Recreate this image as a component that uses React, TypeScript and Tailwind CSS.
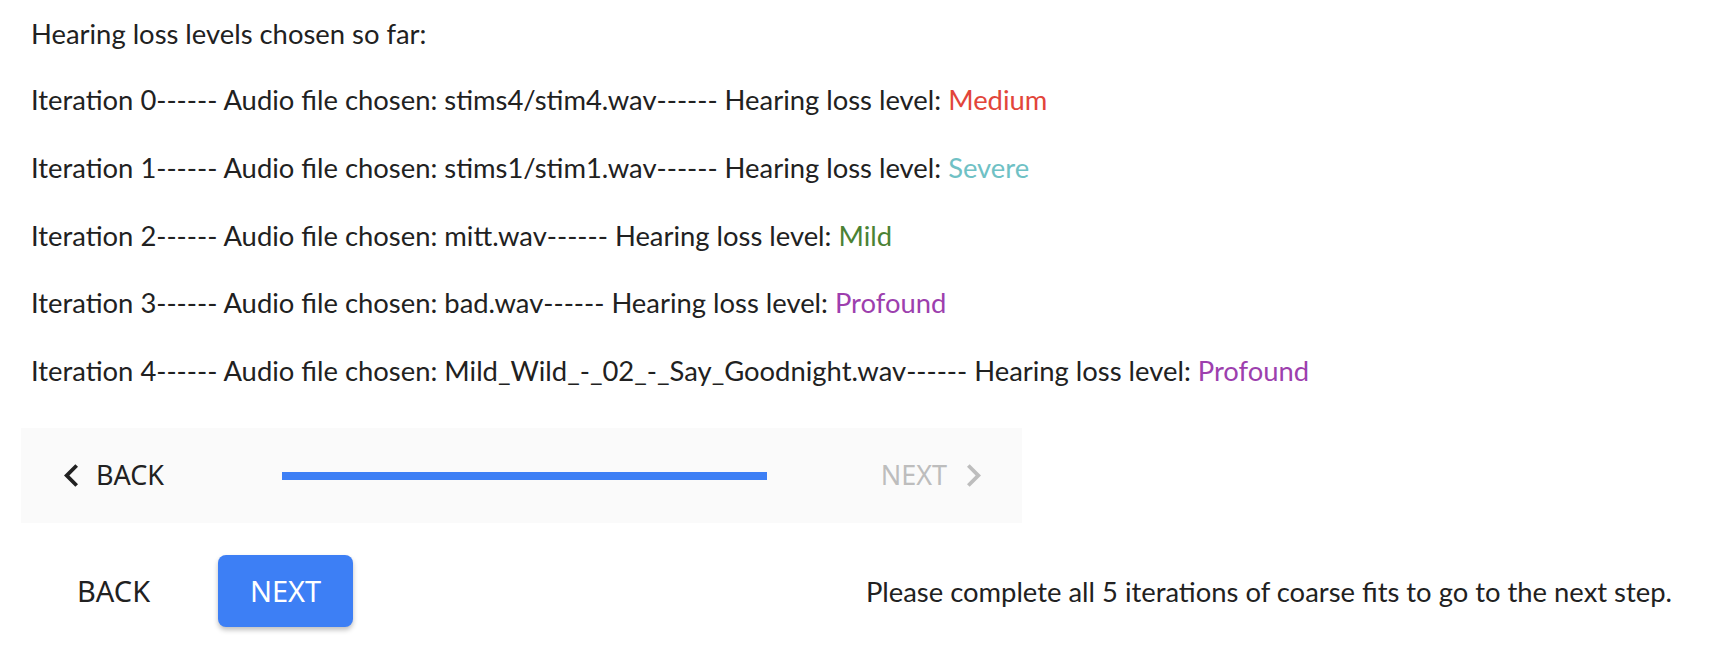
import React from 'react';

const iterations = [
  { file: 'stims4/stim4.wav', level: 'Medium', color: 'text-[#e2453a]' },
  { file: 'stims1/stim1.wav', level: 'Severe', color: 'text-[#6fc1c5]' },
  { file: 'mitt.wav', level: 'Mild', color: 'text-[#4b8234]' },
  { file: 'bad.wav', level: 'Profound', color: 'text-[#9d3fae]' },
  { file: 'Mild_Wild_-_02_-_Say_Goodnight.wav', level: 'Profound', color: 'text-[#9d3fae]' },
];

function ArrowLeft({ className }: { className?: string }) {
  return (
    <svg viewBox="8 6 7.41 12" className={className} fill="currentColor">
      <path d="M15.41 16.59 10.83 12l4.58-4.59L14 6l-6 6 6 6 1.41-1.41z" />
    </svg>
  );
}

function ArrowRight({ className }: { className?: string }) {
  return (
    <svg viewBox="8.59 6 7.41 12" className={className} fill="currentColor">
      <path d="M8.59 16.59 13.17 12 8.59 7.41 10 6l6 6-6 6-1.41-1.41z" />
    </svg>
  );
}

export default function App() {
  return (
    <div className="w-[1712px] h-[660px] bg-white pl-[21px] pr-[40px] font-['Lato',sans-serif] text-[#212121]">
      {/* Results list */}
      <div className="pl-[10px] pt-[16px] text-[27.4px] leading-[36px]">
        <p className="mb-[30.4px]">Hearing loss levels chosen so far:</p>
        <div className="flex flex-col gap-[31.7px]">
          {iterations.map((it, i) => (
            <p key={i}>
              Iteration {i}------ Audio file chosen: {it.file}------ Hearing loss level:{' '}
              <span className={it.color}>{it.level}</span>
            </p>
          ))}
        </div>
      </div>

      {/* Mobile stepper */}
      <div className="mt-[39px] w-[1001px] h-[95px] bg-[#fafafa] flex items-center font-['Noto_Sans',sans-serif] text-[27px]">
        <button className="w-[261px] pl-[43px] flex items-center gap-[18px] text-[#212121]">
          <ArrowLeft className="w-[14px] h-[23px]" />
          <span>BACK</span>
        </button>
        <div className="w-[485px] h-[8px] bg-[#3d7ff5]" />
        <div className="flex-1 flex justify-end pr-[41px]">
          <button className="flex items-center gap-[20px] text-[#bdbdbd]">
            <span>NEXT</span>
            <ArrowRight className="w-[14px] h-[23px]" />
          </button>
        </div>
      </div>

      {/* Bottom navigation */}
      <div className="mt-[32px] flex items-center">
        <button className="ml-[56px] font-['Noto_Sans',sans-serif] text-[29px] text-[#212121]">BACK</button>
        <button className="ml-[68px] w-[135px] h-[72px] rounded-[8px] bg-[#3d7ff5] text-white font-['Noto_Sans',sans-serif] text-[29px] shadow-[0_3px_5px_rgba(0,0,0,0.25)]">
          NEXT
        </button>
        <p className="ml-auto text-[27.4px]">Please complete all 5 iterations of coarse fits to go to the next step.</p>
      </div>
    </div>
  );
}
